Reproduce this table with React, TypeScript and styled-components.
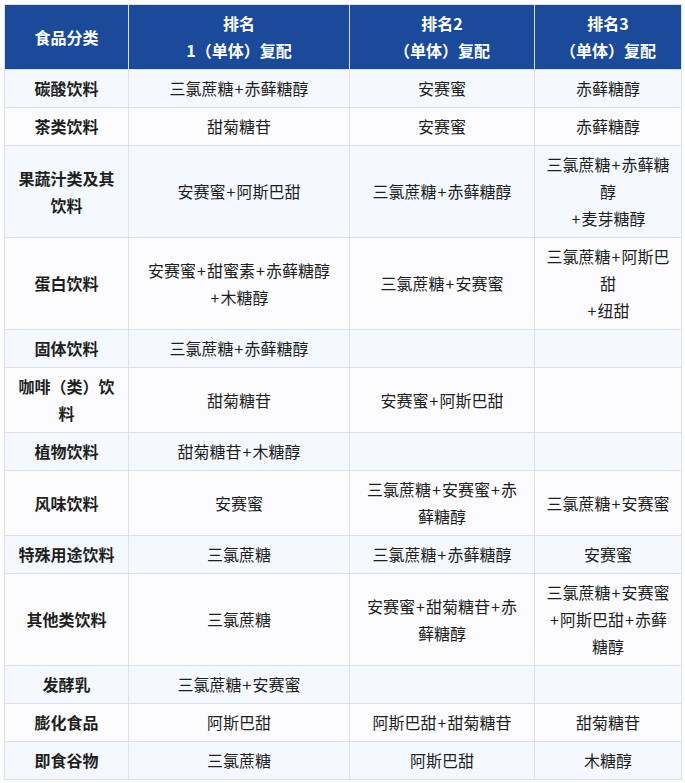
import React from "react";
import styled, { createGlobalStyle } from "styled-components";

const GlobalStyle = createGlobalStyle`
  html, body {
    margin: 0;
    padding: 0;
    background: #ffffff;
  }
  body {
    font-family: "Noto Sans CJK SC", "Noto Sans", sans-serif;
    color: #222222;
  }
`;

// "\n" marks a forced line break inside a cell
type Row = {
  name: string;
  cells: string[];
};

const rows: Row[] = [
  { name: "碳酸饮料", cells: ["三氯蔗糖+赤藓糖醇", "安赛蜜", "赤藓糖醇"] },
  { name: "茶类饮料", cells: ["甜菊糖苷", "安赛蜜", "赤藓糖醇"] },
  {
    name: "果蔬汁类及其\n饮料",
    cells: ["安赛蜜+阿斯巴甜", "三氯蔗糖+赤藓糖醇", "三氯蔗糖+赤藓糖\n醇\n+麦芽糖醇"],
  },
  {
    name: "蛋白饮料",
    cells: ["安赛蜜+甜蜜素+赤藓糖醇\n+木糖醇", "三氯蔗糖+安赛蜜", "三氯蔗糖+阿斯巴\n甜\n+纽甜"],
  },
  { name: "固体饮料", cells: ["三氯蔗糖+赤藓糖醇", "", ""] },
  { name: "咖啡（类）饮\n料", cells: ["甜菊糖苷", "安赛蜜+阿斯巴甜", ""] },
  { name: "植物饮料", cells: ["甜菊糖苷+木糖醇", "", ""] },
  { name: "风味饮料", cells: ["安赛蜜", "三氯蔗糖+安赛蜜+赤\n藓糖醇", "三氯蔗糖+安赛蜜"] },
  { name: "特殊用途饮料", cells: ["三氯蔗糖", "三氯蔗糖+赤藓糖醇", "安赛蜜"] },
  {
    name: "其他类饮料",
    cells: ["三氯蔗糖", "安赛蜜+甜菊糖苷+赤\n藓糖醇", "三氯蔗糖+安赛蜜\n+阿斯巴甜+赤藓\n糖醇"],
  },
  { name: "发酵乳", cells: ["三氯蔗糖+安赛蜜", "", ""] },
  { name: "膨化食品", cells: ["阿斯巴甜", "阿斯巴甜+甜菊糖苷", "甜菊糖苷"] },
  { name: "即食谷物", cells: ["三氯蔗糖", "阿斯巴甜", "木糖醇"] },
];

const renderText = (text: string) =>
  text.split("\n").map((line, i) => (
    <React.Fragment key={i}>
      {i > 0 && <br />}
      {line.split("+").map((part, j) => (
        <React.Fragment key={j}>
          {j > 0 && <Plus>+</Plus>}
          {part}
        </React.Fragment>
      ))}
    </React.Fragment>
  ));

const App: React.FC = () => {
  return (
    <Page>
      <GlobalStyle />
      <Table>
        <colgroup>
          <col style={{ width: 124 }} />
          <col style={{ width: 221 }} />
          <col style={{ width: 185 }} />
          <col style={{ width: 147 }} />
        </colgroup>
        <thead>
          <tr>
            <HeadCell>食品分类</HeadCell>
            <HeadCell>{renderText("排名\n1（单体）复配")}</HeadCell>
            <HeadCell>{renderText("排名2\n（单体）复配")}</HeadCell>
            <HeadCell>{renderText("排名3\n（单体）复配")}</HeadCell>
          </tr>
        </thead>
        <tbody>
          {rows.map((row, i) => (
            <BodyRow key={i} $striped={i % 2 === 0}>
              <NameCell>{renderText(row.name)}</NameCell>
              {row.cells.map((cell, j) => (
                <Cell key={j}>{renderText(cell)}</Cell>
              ))}
            </BodyRow>
          ))}
        </tbody>
      </Table>
    </Page>
  );
};

export default App;

const Page = styled.div`
  padding: 4px;
`;

const Table = styled.table`
  width: 677px;
  table-layout: fixed;
  border-collapse: collapse;
  font-size: 16px;
  line-height: 27px;
`;

const HeadCell = styled.th`
  background: #1b4a9b;
  color: #ffffff;
  font-weight: 700;
  text-align: center;
  vertical-align: middle;
  padding: 5px 8px;
  border: 1px solid #dcdfe6;
`;

const BodyRow = styled.tr<{ $striped: boolean }>`
  background: ${(p) => (p.$striped ? "#f5f9ff" : "#fcfcfe")};
`;

const Cell = styled.td`
  text-align: center;
  vertical-align: middle;
  padding: 5px 8px;
  border: 1px solid #dcdfe6;
  color: #1f1f1f;
`;

const NameCell = styled(Cell)`
  font-weight: 700;
`;

const Plus = styled.span`
  margin: 0 1px;
`;
